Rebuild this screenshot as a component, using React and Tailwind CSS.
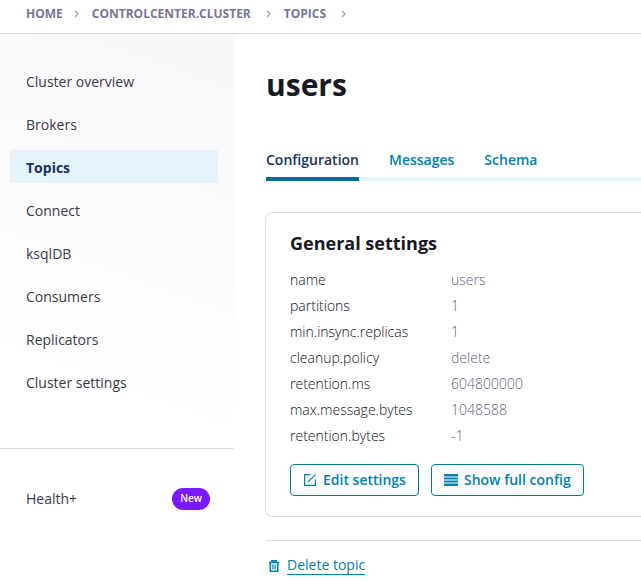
// src/App.jsx
import { useState } from "react";

const crumbs = ["HOME", "CONTROLCENTER.CLUSTER", "TOPICS"];

const navItems = [
  "Cluster overview",
  "Brokers",
  "Topics",
  "Connect",
  "ksqlDB",
  "Consumers",
  "Replicators",
  "Cluster settings",
];

const tabs = ["Configuration", "Messages", "Schema"];

const settings = [
  { key: "name", value: "users" },
  { key: "partitions", value: "1" },
  { key: "min.insync.replicas", value: "1" },
  { key: "cleanup.policy", value: "delete" },
  { key: "retention.ms", value: "604800000" },
  { key: "max.message.bytes", value: "1048588" },
  { key: "retention.bytes", value: "-1" },
];

function ChevronIcon() {
  return (
    <svg className="w-2 h-2 text-[#9a98ac]" viewBox="0 0 8 8" fill="none" stroke="currentColor" strokeWidth="1.2" aria-hidden="true">
      <path d="M2 1l3 3-3 3" />
    </svg>
  );
}

function EditIcon() {
  return (
    <svg className="w-3.5 h-3.5 shrink-0" viewBox="0 0 14 14" fill="none" stroke="currentColor" strokeWidth="1.2" aria-hidden="true">
      <path d="M7.5 1.6H1.6v10.8h10.8V6.5" />
      <path d="M4.8 9.2L12.6 1.4" />
    </svg>
  );
}

function ListIcon() {
  return (
    <svg className="w-3.5 h-3 shrink-0" viewBox="0 0 14 12" fill="currentColor" aria-hidden="true">
      <path opacity="0.5" d="M0 1h14v10H0z" />
      <path d="M0 0h14v2H0zM0 4h14v1H0zM0 7h14v1H0zM0 10h14v2H0z" />
    </svg>
  );
}

function TrashIcon() {
  return (
    <svg className="w-3 h-3 shrink-0" viewBox="0 0 12 12" fill="none" stroke="currentColor" strokeWidth="1.6" aria-hidden="true">
      <path d="M1 2.5h10M4 2V.8h4V2M2.3 3v8.2h7.4V3" />
      <path strokeWidth="1.2" d="M4.9 4.5v4.8M7.1 4.5v4.8" />
    </svg>
  );
}

function Sidebar() {
  return (
    <aside className="w-[234px] shrink-0">
      <nav className="bg-linear-[20deg] from-white from-20% to-[#f7f7fa] border-b border-[#dcdce1] pt-[30px] pb-[50px] pl-2.5 pr-4">
        <ul className="flex flex-col gap-2.5">
          {navItems.map(item => (
            <li key={item}>
              <a
                href="#"
                aria-current={item === "Topics" ? "page" : undefined}
                className={
                  item === "Topics"
                    ? "flex items-center h-[33px] px-4 pt-0.5 bg-[#e5f4fb] font-bold text-[#173361]"
                    : "flex items-center h-[33px] px-4 pt-0.5 text-[#3a3a48]"
                }
              >
                {item}
              </a>
            </li>
          ))}
        </ul>
      </nav>

      <a href="#" className="flex items-center justify-between h-[33px] mt-8 pt-0.5 pl-[26px] pr-6 text-[#3a3a48]">
        Health+
        <span className="flex items-center justify-center w-[38px] h-[22px] rounded-full bg-[#7a19ff] text-white text-[10px] font-semibold">
          New
        </span>
      </a>
    </aside>
  );
}

export default function App() {
  const [activeTab, setActiveTab] = useState("Configuration");

  return (
    <div className="min-h-screen overflow-x-hidden bg-white text-sm font-['Open_Sans','Noto_Sans',sans-serif]">
      {/* Breadcrumbs */}
      <header className="border-b border-[#dcdce1]">
        <nav aria-label="Breadcrumb" className="flex items-center gap-[11px] h-[33px] pl-[26px] pb-1.5 text-xs font-bold text-[#77759a]">
          {crumbs.map(crumb => (
            <span key={crumb} className="flex items-center gap-3.5 first:gap-2.5">
              <a href="#">{crumb}</a>
              <ChevronIcon />
            </span>
          ))}
        </nav>
      </header>

      <div className="flex">
        <Sidebar />

        <main className="flex-1 min-w-0 pl-8">
          <h1 className="mt-[29px] text-3xl leading-[44px] font-bold text-[#191924]">users</h1>

          {/* Tabs */}
          <div role="tablist" className="flex gap-[30px] mt-[38px] border-b-4 border-[#e5f4fb]">
            {tabs.map(tab => (
              <button
                key={tab}
                role="tab"
                aria-selected={activeTab === tab}
                onClick={() => setActiveTab(tab)}
                className={
                  activeTab === tab
                    ? "-mb-1 h-9 pb-0.5 border-b-4 border-[#006d96] font-semibold text-[#173361]"
                    : "-mb-1 h-9 pb-0.5 border-b-4 border-transparent font-semibold text-[#0080b0]"
                }
              >
                {tab}
              </button>
            ))}
          </div>

          {/* General settings */}
          <section className="-ml-px mt-[31px] border border-r-0 border-[#dfdfe5] rounded-l-lg pt-4 pl-6 pb-5">
            <h2 className="text-lg leading-7 font-bold text-[#191924]">General settings</h2>
            <table className="mt-2.5">
              <tbody>
                {settings.map(row => (
                  <tr key={row.key} className="h-[26px]">
                    <th scope="row" className="w-[161px] p-0 text-left font-light text-[#0f0f18]">{row.key}</th>
                    <td className="p-0 font-light text-[#5f5d84]">{row.value}</td>
                  </tr>
                ))}
              </tbody>
            </table>

            <div className="flex gap-3 mt-[15px]">
              <button className="flex items-center gap-1.5 h-8 px-3 border border-[#007f8f] rounded font-semibold text-[#0080b0] whitespace-nowrap">
                <EditIcon />
                Edit settings
              </button>
              <button className="flex items-center gap-1.5 h-8 px-3 border border-[#007f8f] rounded font-semibold text-[#0080b0] whitespace-nowrap">
                <ListIcon />
                Show full config
              </button>
            </div>
          </section>

          <div className="mt-[23px] pt-[15px] pl-0.5 border-t border-[#dcdce1]">
            <button className="flex items-center gap-[7px] text-[#0080b0]">
              <TrashIcon />
              <span className="border-b border-[#0080b0] leading-[18px]">Delete topic</span>
            </button>
          </div>
        </main>
      </div>
    </div>
  );
}
